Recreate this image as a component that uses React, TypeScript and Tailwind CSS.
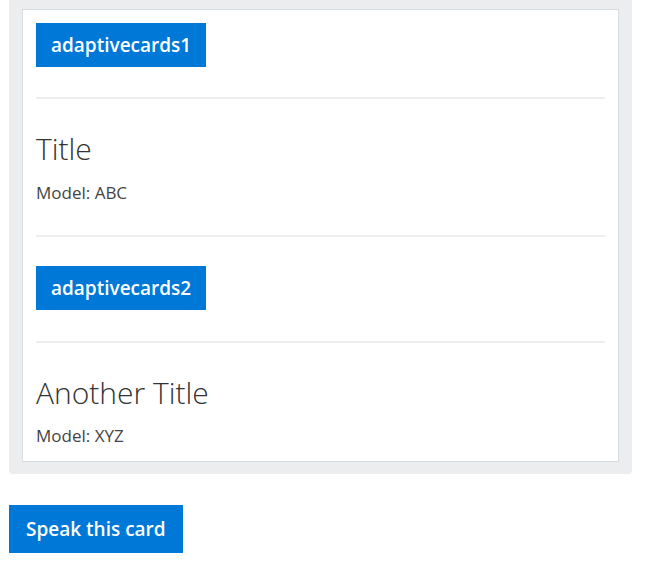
export default function App() {
  const font = { fontFamily: '"Open Sans", "Noto Sans", sans-serif' };
  return (
    <div className="min-h-screen bg-white pl-[9px] pr-[29px]" style={font}>
      <div className="bg-[#ebedee] rounded-b-[4px] px-[13px] pt-[9px] pb-[12px] w-[623px]">
        <div className="bg-white border border-[#d5dde0] px-[13px] pt-[13px] pb-[14px]">
          <div className="flex">
            <span className="bg-[#0078d7] text-white font-semibold text-[19px] h-[44px] px-[15px] flex items-center">
              adaptivecards1
            </span>
          </div>
          <div className="h-[2px] bg-[#eeeeee] mt-[30px]" />
          <div className="text-[30px] font-light text-[#333333] leading-[40px] mt-[30px]">Title</div>
          <div className="text-[17px] text-[#444444] leading-[22px] mt-[13px]">Model: ABC</div>
          <div className="h-[2px] bg-[#eeeeee] mt-[31px]" />
          <div className="flex mt-[29px]">
            <span className="bg-[#0078d7] text-white font-semibold text-[19px] h-[44px] px-[15px] flex items-center">
              adaptivecards2
            </span>
          </div>
          <div className="h-[2px] bg-[#eeeeee] mt-[31px]" />
          <div className="text-[30px] font-light text-[#333333] leading-[40px] mt-[30px]">Another Title</div>
          <div className="text-[17px] text-[#444444] leading-[22px] mt-[12px]">Model: XYZ</div>
        </div>
      </div>
      <button className="mt-[31px] bg-[#0078d7] text-white font-semibold text-[19px] h-[48px] px-[17px]">
        Speak this card
      </button>
    </div>
  );
}
